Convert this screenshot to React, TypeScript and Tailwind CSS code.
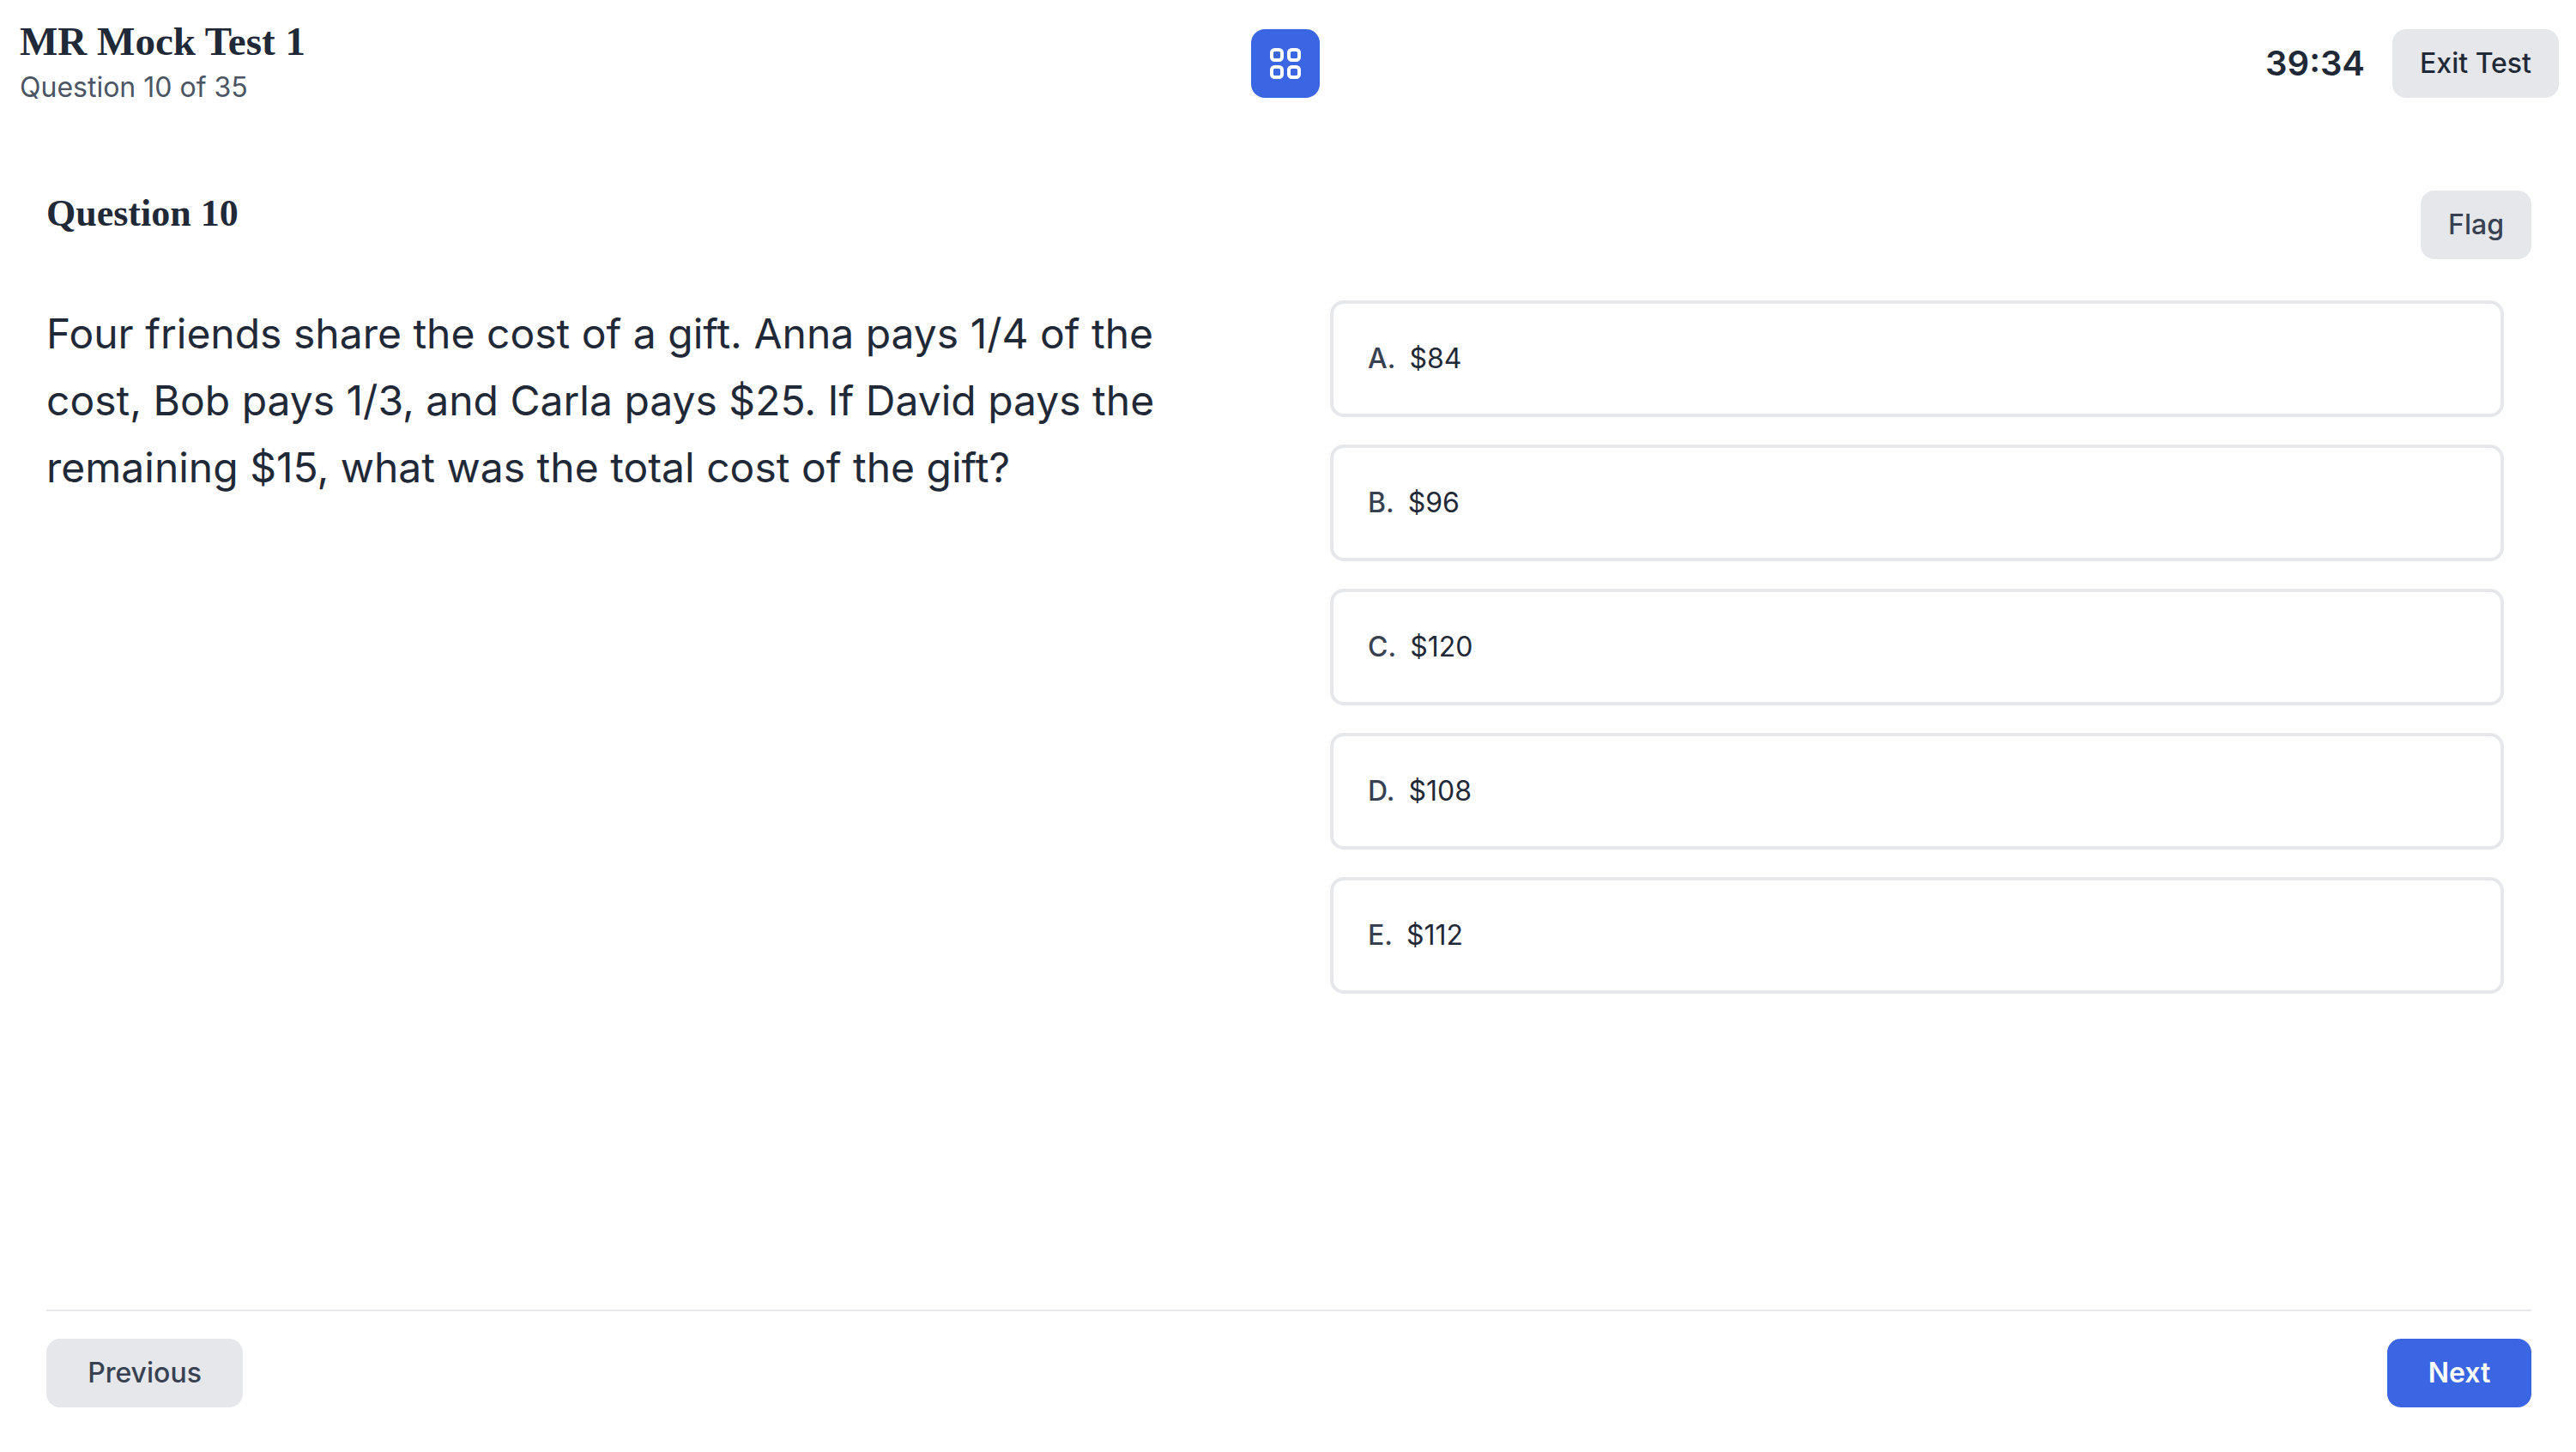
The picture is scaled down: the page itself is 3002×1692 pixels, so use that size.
const sans = "font-['Inter',sans-serif]";
const serif = "font-['Liberation_Serif',serif]";

const options = [
  { key: "A.", text: "$84" },
  { key: "B.", text: "$96" },
  { key: "C.", text: "$120" },
  { key: "D.", text: "$108" },
  { key: "E.", text: "$112" },
];

function GridIcon() {
  return (
    <svg width="36" height="36" viewBox="0 0 36 36" fill="none" stroke="white" strokeWidth="4">
      <rect x="2" y="2" width="12" height="12" rx="3.5" />
      <rect x="22" y="2" width="12" height="12" rx="3.5" />
      <rect x="2" y="22" width="12" height="12" rx="3.5" />
      <rect x="22" y="22" width="12" height="12" rx="3.5" />
    </svg>
  );
}

export default function App() {
  return (
    <div className={`h-screen flex flex-col bg-white ${sans}`}>
      {/* Header */}
      <header className="relative flex items-center justify-between pl-[23px] pr-[20px] h-[148px] shrink-0">
        <div>
          <h1 className={`text-[47px] leading-[46px] mb-[10px] font-bold text-[#1f2937] ${serif}`}>MR Mock Test 1</h1>
          <p className="text-[32px] leading-[42px] text-[#4b5563]">Question 10 of 35</p>
        </div>
        <button className="absolute left-[1458px] top-[34px] w-[80px] h-[80px] rounded-[16px] bg-[#3a65e3] flex items-center justify-center">
          <GridIcon />
        </button>
        <div className="flex items-center gap-[32px]">
          <span className="text-[40px] font-semibold text-[#1f2937]">39:34</span>
          <button className="h-[80px] w-[194px] rounded-[16px] bg-[#e5e7eb] text-[32px] font-[530] text-[#1f2937]">Exit Test</button>
        </div>
      </header>

      {/* Question */}
      <main className="flex-1 flex flex-col pl-[54px] pr-[52px]">
        <div className="flex items-start justify-between pt-[74px]">
          <h2 className={`text-[44px] leading-[56px] -mt-[1px] font-bold text-[#1f2937] ${serif}`}>Question 10</h2>
          <button className="h-[80px] w-[129px] rounded-[16px] bg-[#e5e7eb] text-[32px] font-[530] text-[#374151]">Flag</button>
        </div>
        <div className="flex mt-[48px] flex-1">
          <p className="w-[1340px] text-[48px] leading-[78px] font-[420] text-[#1f2937]">
            Four friends share the cost of a gift. Anna pays 1/4 of the cost, Bob pays 1/3, and Carla pays $25. If David pays the remaining $15, what was the total cost of the gift?
          </p>
          <div className="ml-[156px] w-[1368px] flex flex-col gap-[32px]">
            {options.map((o) => (
              <div key={o.key} className="h-[136px] border-[4px] border-[#e5e7eb] rounded-[16px] flex items-center pl-[40px] text-[32px] text-[#1f2937]">
                <span className="font-[550] text-[#374151] mr-[16px]">{o.key}</span>
                {o.text}
              </div>
            ))}
          </div>
        </div>

        {/* Footer */}
        <footer className="border-t-2 border-[#e5e7eb] pt-[32px] pb-[52px] flex justify-between">
          <button className="h-[80px] w-[229px] rounded-[16px] bg-[#e5e7eb] text-[32px] font-[530] text-[#374151]">Previous</button>
          <button className="h-[80px] w-[168px] rounded-[16px] bg-[#3a65e3] text-[32px] font-semibold text-white">Next</button>
        </footer>
      </main>
    </div>
  );
}
